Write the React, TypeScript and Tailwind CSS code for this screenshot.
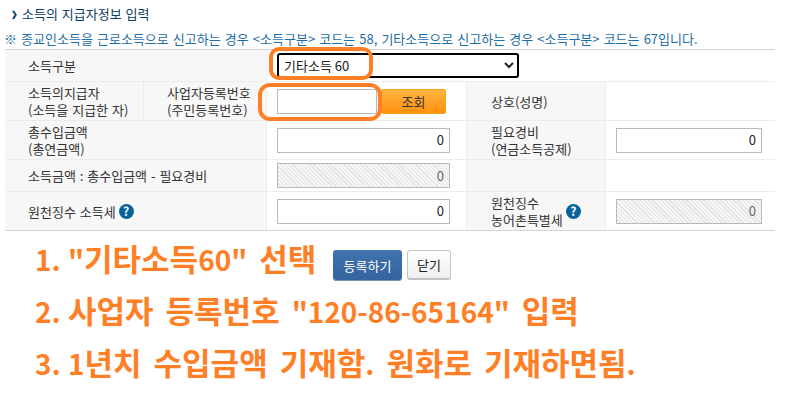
import React from "react";

const font = "font-['Noto_Sans_CJK_KR','Noto_Sans',sans-serif]";
const hatch =
  "bg-[repeating-linear-gradient(45deg,#f6f6f6,#f6f6f6_2px,#e2e2e2_2px,#e2e2e2_3px)]";

function Help() {
  return (
    <span className="inline-flex h-[15px] w-[15px] shrink-0 items-center justify-center rounded-full bg-[#07629b] text-[12px] font-bold leading-none text-white">
      ?
    </span>
  );
}

function Amount({ hatched, w = "w-[173px]" }: { hatched?: boolean; w?: string }) {
  return (
    <div
      className={`flex h-[25px] ${w} items-center justify-end border border-[#b9b9b9] pr-[5px] text-[13px] ${
        hatched ? `${hatch} text-[#666]` : "bg-white text-[#222]"
      }`}
    >
      0
    </div>
  );
}

function A({ children }: { children: React.ReactNode }) {
  return <span className="text-[28px] [word-spacing:1px]">{children}</span>;
}

const label =
  "flex items-center bg-[#f7f7f7] text-[13px] leading-[17px] text-[#333] [word-spacing:1px]";
const val = "flex items-center bg-white pl-[10px]";

export default function App() {
  return (
    <div className={`relative h-[405px] w-[795px] overflow-hidden bg-white ${font}`}>
      <div className="flex h-[28px] items-center pl-[11px] text-[13px] text-[#0d3c63] [word-spacing:1px]">
        <span className="mr-[4px] text-[8px] font-bold leading-none text-[#0d3c63]">❯</span>
        소득의 지급자정보 입력
      </div>
      <div className="flex h-[21px] items-center whitespace-pre pl-[4px] text-[13px] text-[#1e6ea8] [word-spacing:1.2px]">
        ※ 종교인소득을 근로소득으로 신고하는 경우 {"<소득구분>"} 코드는 58, 기타소득으로 신고하는 경우 {"<소득구분>"} 코드는 67입니다.
      </div>
      <div className="ml-[5px] grid w-[770px] grid-cols-[138px_122px_199px_138px_169px] grid-rows-[31px_38px_38px_31px_38px] gap-px border-y border-[#d4d4d4] bg-[#ececec]">
        <div className={`${label} col-span-2 pl-[23px]`}>소득구분</div>
        <div className={`${val} col-span-3`}>
          <select
            defaultValue="60"
            className="h-[25px] w-[242px] rounded-[3px] border-2 border-black bg-white pl-[1px] text-[13px] text-[#222]"
          >
            <option value="60">기타소득 60</option>
          </select>
        </div>

        <div className={`${label} pl-[23px]`}>
          <span>
            소득의지급자
            <br />
            (소득을 지급한 자)
          </span>
        </div>
        <div className={`${label} pl-[23px]`}>
          <span>
            사업자등록번호
            <br />
            (주민등록번호)
          </span>
        </div>
        <div className={`${val} gap-[4px]`}>
          <div className="h-[25px] w-[100px] border border-[#b9b9b9] bg-white" />
          <button className="h-[25px] w-[65px] rounded-[2px] border border-[#f3a01f] bg-gradient-to-b from-[#ffb53c] to-[#ff8f0a] text-[13px] leading-none text-[#333]">
            조회
          </button>
        </div>
        <div className={`${label} pl-[24px]`}>상호(성명)</div>
        <div className={val} />

        <div className={`${label} col-span-2 pl-[23px]`}>
          <span>
            총수입금액
            <br />
            (총연금액)
          </span>
        </div>
        <div className={val}>
          <Amount />
        </div>
        <div className={`${label} pl-[24px]`}>
          <span>
            필요경비
            <br />
            (연금소득공제)
          </span>
        </div>
        <div className={val}>
          <Amount w="w-[146px]" />
        </div>

        <div className={`${label} col-span-2 pl-[23px]`}>소득금액 : 총수입금액 - 필요경비</div>
        <div className={val}>
          <Amount hatched />
        </div>
        <div className={label} />
        <div className={val} />

        <div className={`${label} col-span-2 gap-[3px] pl-[23px]`}>
          원천징수 소득세
          <Help />
        </div>
        <div className={val}>
          <Amount />
        </div>
        <div className={`${label} gap-[3px] pl-[24px]`}>
          <span>
            원천징수
            <br />
            농어촌특별세
          </span>
          <Help />
        </div>
        <div className={val}>
          <Amount hatched w="w-[146px]" />
        </div>
      </div>

      <div className="mt-[1px] pl-[35px] text-[31px] font-bold leading-[52px] text-[#ff7f27] [word-spacing:5px]">
        <div className="flex h-[52px] items-center whitespace-pre">
          <span className="w-[298px]">
            <A>1. "</A>기타소득<A>60"</A> 선택
          </span>
          <button className="mt-[14px] flex h-[30px] w-[69px] items-center justify-center rounded-[3px] bg-gradient-to-b from-[#4073b0] to-[#35649e] text-[13px] font-normal leading-none text-white shadow-[0_1px_0_#7d8fa5]">
            등록하기
          </button>
          <button className="ml-[5px] mt-[14px] flex h-[30px] w-[44px] items-center justify-center rounded-[3px] border border-b-2 border-[#c4c4c4] bg-gradient-to-b from-white to-[#f0f0f0] text-[13px] font-normal leading-none text-[#222]">
            닫기
          </button>
        </div>
        <div className="h-[52px] whitespace-pre">
          <A>2. </A>사업자 등록번호 <A>"120-86-65164"</A> 입력
        </div>
        <div className="h-[52px] whitespace-pre">
          <A>3. 1</A>년치 수입금액 기재함<A>.</A> 원화로 기재하면됨<A>.</A>
        </div>
      </div>

      <div className="pointer-events-none absolute left-[269px] top-[47px] h-[33px] w-[104px] rounded-[10px] border-[4px] border-[#ff7f27]" />
      <div className="pointer-events-none absolute left-[258px] top-[83px] h-[38px] w-[124px] rounded-[12px] border-[4px] border-[#ff7f27]" />
    </div>
  );
}
